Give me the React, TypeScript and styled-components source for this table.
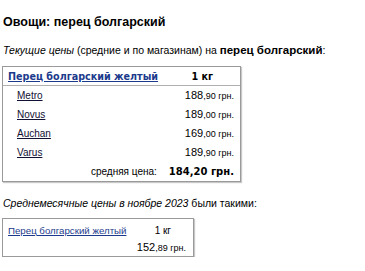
import React from "react";
import styled, { createGlobalStyle } from "styled-components";

const GlobalStyle = createGlobalStyle`
  body {
    margin: 0;
    background: #ffffff;
    color: #000000;
    font-family: "Liberation Sans", Arial, sans-serif;
  }
`;

const Page = styled.div`
  padding: 0 2px;
  width: 361px;
`;

const Title = styled.h1`
  margin: 0;
  padding: 13px 0 0 1px;
  font-size: 12.5px;
  line-height: 18px;
  font-weight: bold;
`;

const Lead = styled.p`
  margin: 0;
  padding: 12px 0 8px 1px;
  font-size: 10.5px;
  line-height: 15px;
  white-space: nowrap;
  b {
    font-size: 11.5px;
  }
`;

const Card = styled.div<{ $width: number }>`
  width: ${(p) => p.$width}px;
  box-sizing: border-box;
  border: 1px solid #9a9a9a;
  box-shadow: 1px 1px 1px #c8c8c8;
`;

const HeadRow = styled.div`
  display: flex;
  align-items: center;
  justify-content: space-between;
  height: 18px;
  padding: 0 27px 0 5px;
  border-bottom: 1px solid #b0b0b0;
`;

const HeadLink = styled.a`
  font-family: "DejaVu Sans", Verdana, sans-serif;
  font-size: 9.6px;
  font-weight: bold;
  color: #1b3a8c;
  text-decoration: underline;
`;

const HeadUnit = styled.span`
  font-family: "DejaVu Sans", Verdana, sans-serif;
  font-size: 9.6px;
  font-weight: bold;
`;

const Rows = styled.div`
  padding: 0 6px 0 14px;
`;

const StoreRow = styled.div`
  display: flex;
  align-items: baseline;
  justify-content: space-between;
  height: 19px;
  line-height: 19px;
`;

const StoreLink = styled.a`
  font-size: 10px;
  color: #111133;
  text-decoration: underline;
`;

const Price = styled.span<{ $size?: number }>`
  font-size: ${(p) => p.$size ?? 11}px;
  color: #000;
  small {
    font-size: ${(p) => (p.$size ?? 11) - 2}px;
  }
`;

const AverageRow = styled.div`
  display: flex;
  align-items: baseline;
  justify-content: flex-end;
  gap: 12px;
  height: 19px;
  line-height: 19px;
`;

const AverageLabel = styled.span`
  font-size: 10px;
`;

const AverageValue = styled.span`
  font-family: "DejaVu Sans", Verdana, sans-serif;
  font-size: 10px;
  font-weight: bold;
`;

const Note = styled.p`
  margin: 0;
  padding: 14px 0 7px 1px;
  font-size: 10.5px;
  line-height: 15px;
`;

const SmallHead = styled.div`
  display: flex;
  align-items: baseline;
  justify-content: space-between;
  padding: 5px 22px 0 5px;
  height: 14px;
  line-height: 14px;
`;

const SmallLink = styled.a`
  font-size: 9.7px;
  color: #1b3a8c;
  text-decoration: underline;
`;

const SmallUnit = styled.span`
  font-size: 10px;
`;

const SmallPrice = styled.div`
  text-align: right;
  padding: 1px 7px 3px 0;
  height: 14px;
  line-height: 14px;
`;

const stores = [
  { name: "Metro", main: "188", rest: ",90 грн." },
  { name: "Novus", main: "189", rest: ",00 грн." },
  { name: "Auchan", main: "169", rest: ",00 грн." },
  { name: "Varus", main: "189", rest: ",90 грн." },
];

const App = () => {
  return (
    <Page>
      <GlobalStyle />
      <Title>Овощи: перец болгарский</Title>
      <Lead>
        <em>Текущие цены</em> (средние и по магазинам) на <b>перец болгарский</b>:
      </Lead>
      <Card $width={239}>
        <HeadRow>
          <HeadLink>Перец болгарский желтый</HeadLink>
          <HeadUnit>1 кг</HeadUnit>
        </HeadRow>
        <Rows>
          {stores.map((s) => (
            <StoreRow key={s.name}>
              <StoreLink>{s.name}</StoreLink>
              <Price>
                {s.main}
                <small>{s.rest}</small>
              </Price>
            </StoreRow>
          ))}
          <AverageRow>
            <AverageLabel>средняя цена:</AverageLabel>
            <AverageValue>184,20 грн.</AverageValue>
          </AverageRow>
        </Rows>
      </Card>
      <Note>
        <em>Среднемесячные цены в ноябре 2023</em> были такими:
      </Note>
      <Card $width={192}>
        <SmallHead>
          <SmallLink>Перец болгарский желтый</SmallLink>
          <SmallUnit>1 кг</SmallUnit>
        </SmallHead>
        <SmallPrice>
          <Price>
            152<small>,89 грн.</small>
          </Price>
        </SmallPrice>
      </Card>
    </Page>
  );
};

export default App;
